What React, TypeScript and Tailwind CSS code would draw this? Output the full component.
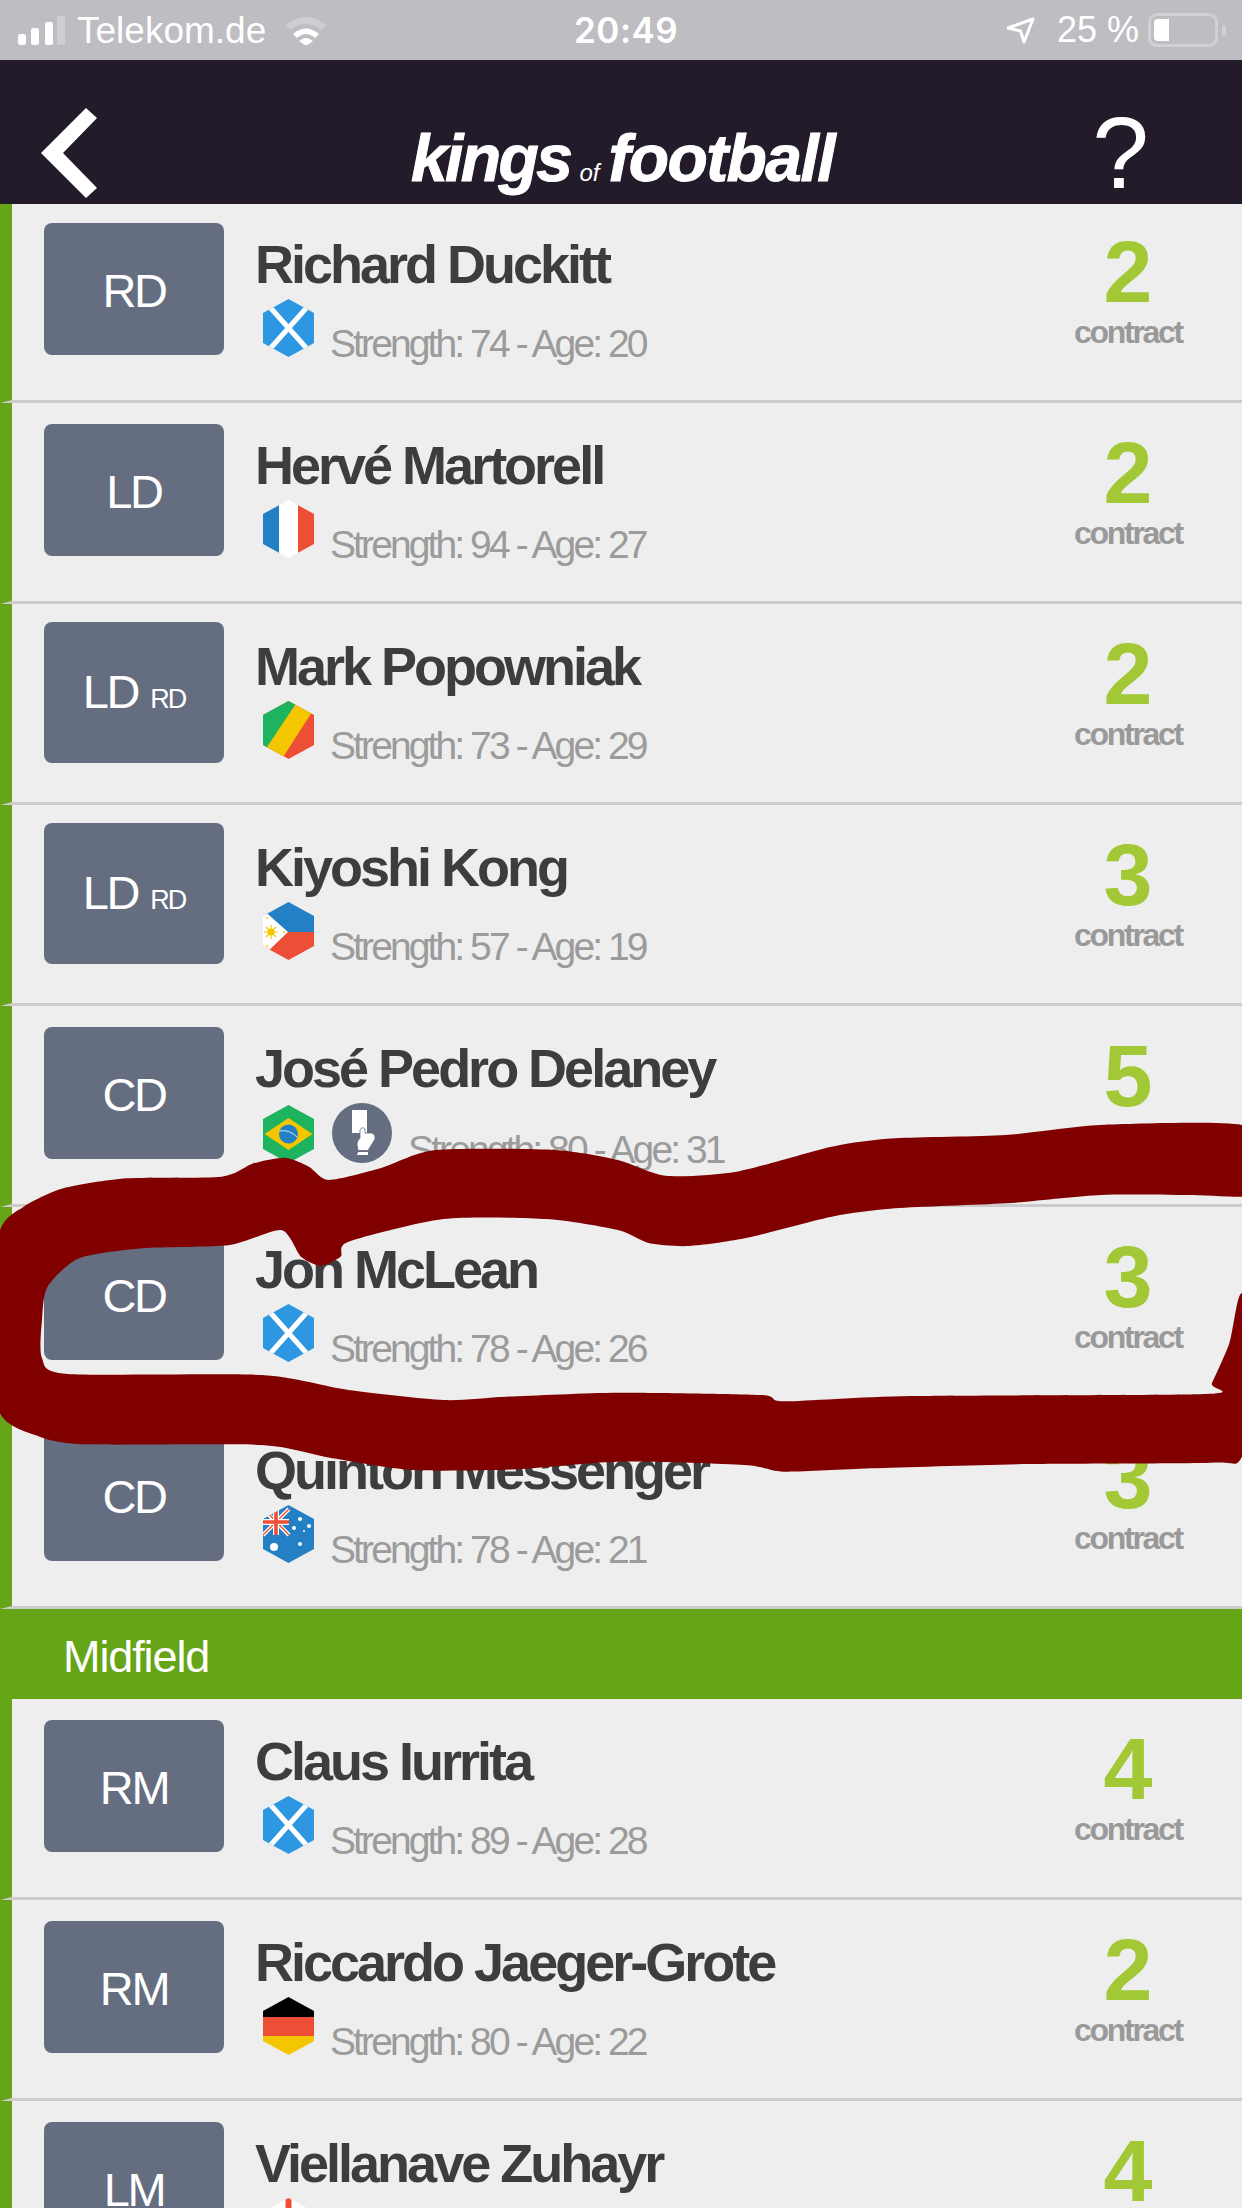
import { useId, type ReactNode } from "react";

const RED = "#ec4e36";
const BLUE = "#2480c4";
const GREEN = "#1db35f";
const YELLOW = "#f4c600";

function Hex({ children }: { children: ReactNode }) {
  const id = useId();
  return (
    <svg width="51" height="58" viewBox="0 0 51 58" className="shrink-0">
      <defs>
        <clipPath id={id}>
          <polygon points="25.5,0 51,14 51,44 25.5,58 0,44 0,14" />
        </clipPath>
      </defs>
      <g clipPath={`url(#${id})`}>{children}</g>
    </svg>
  );
}

const flags: Record<string, ReactNode> = {
  sco: (
    <>
      <rect width="51" height="58" fill="#2e97e2" />
      <path d="M5 6 L46 52 M46 6 L5 52" stroke="#fff" strokeWidth="5" />
    </>
  ),
  fra: (
    <>
      <rect width="16" height="58" fill={BLUE} />
      <rect x="16" width="19" height="58" fill="#fff" />
      <rect x="35" width="16" height="58" fill={RED} />
    </>
  ),
  cog: (
    <>
      <rect width="51" height="58" fill={RED} />
      <polygon points="34,1 49,11 19,58 -2,58 -2,50" fill={YELLOW} />
      <polygon points="34,1 30,-1 -2,-1 -2,52 4,46" fill={GREEN} />
    </>
  ),
  phi: (
    <>
      <rect width="51" height="30" fill={BLUE} />
      <rect y="30" width="51" height="28" fill={RED} />
      <polygon points="-2,6 25,30 -2,56" fill="#fff" />
      <circle cx="8" cy="30" r="3.6" fill={YELLOW} />
      <path d="M8 23 V37 M1 30 H15 M3 25 L13 35 M13 25 L3 35" stroke={YELLOW} strokeWidth="1.2" />
      <circle cx="4" cy="16" r="1" fill={YELLOW} />
      <circle cx="4" cy="44" r="1" fill={YELLOW} />
      <circle cx="21" cy="30" r="1" fill={YELLOW} />
    </>
  ),
  bra: (
    <>
      <rect width="51" height="58" fill={GREEN} />
      <polygon points="1.5,29 25.5,13 49.5,29 25.5,45" fill={YELLOW} />
      <circle cx="25.5" cy="29" r="9.5" fill={BLUE} />
      <path d="M16.5 26 Q26 24 34 32" stroke="#cfe8f2" strokeWidth="1" fill="none" />
    </>
  ),
  aus: (
    <>
      <rect width="51" height="58" fill={BLUE} />
      <path d="M0 30 L26 4 M0 4 L26 30" stroke="#fff" strokeWidth="4" />
      <path d="M0 30 L26 4 M1 4 L26 30" stroke={RED} strokeWidth="1.4" />
      <path d="M13 2 V30 M0 17 H26" stroke="#fff" strokeWidth="6" />
      <path d="M13 2 V30 M0 17 H26" stroke={RED} strokeWidth="3.6" />
      <circle cx="11" cy="42" r="4" fill="#fff" />
      <circle cx="37" cy="14" r="2" fill="#fff" />
      <circle cx="31" cy="23" r="2" fill="#fff" />
      <circle cx="46" cy="21" r="2" fill="#fff" />
      <circle cx="41" cy="26" r="1" fill="#fff" />
      <circle cx="37" cy="39" r="2" fill="#fff" />
    </>
  ),
  ger: (
    <>
      <rect width="51" height="20" fill="#000" />
      <rect y="20" width="51" height="19" fill={RED} />
      <rect y="39" width="51" height="19" fill={YELLOW} />
    </>
  ),
  eng: (
    <>
      <rect width="51" height="58" fill="#fff" />
      <rect x="22.5" width="6" height="58" fill={RED} />
      <rect y="26" width="51" height="6" fill={RED} />
    </>
  ),
};

function CardIcon() {
  return (
    <svg width="60" height="60" viewBox="0 0 60 60" className="ml-[18px] shrink-0">
      <circle cx="30" cy="30" r="30" fill="#656d80" />
      <rect x="20" y="7" width="15" height="23" fill="#fff" />
      <path
        d="M28 27 Q30 23 33 26 L33 30 L40 30 Q44 32 43 36 L36 47.5 L26 47.5 L25 41 Q25 38 28 35 Z"
        fill="#fff"
        stroke="#656d80"
        strokeWidth="0.8"
      />
      <path d="M26 49 H36 V52 H25 Z" fill="#fff" />
    </svg>
  );
}

type P = {
  pos: string;
  sub?: string;
  name: string;
  flag: string;
  s: number;
  a: number;
  c: number;
  card?: boolean;
};

function Row({ pos, sub, name, flag, s, a, c, card }: P) {
  return (
    <div className="flex h-[201px] shrink-0 border-l-[12px] border-b-[3px] border-l-[#65a517] border-b-[#cccccc] bg-[#eeeeee] pl-[32px] pr-[34px]">
      <div
        className={`flex w-[180px] shrink-0 items-center justify-center rounded-[8px] bg-[#656d80] text-white ${
          sub ? "mt-[18px] h-[141px] pb-[3px]" : "mt-[21px] h-[132px] pt-[3px]"
        }`}
      >
        <div className="flex items-baseline">
          <span className="text-[47px] leading-none tracking-[-2.4px]">{pos}</span>
          {sub && <span className="ml-[12px] text-[27px] leading-none tracking-[-2px]">{sub}</span>}
        </div>
      </div>
      <div className="ml-[31px] flex-1 pt-[35px]">
        <div className="whitespace-nowrap text-[54px] font-bold leading-[54px] tracking-[-3px] text-[#3c3d3f]">{name}</div>
        <div className="ml-[8px] mt-[8px] flex items-baseline">
          <Hex>{flags[flag]}</Hex>
          {card && <CardIcon />}
          <span className="ml-[16px] whitespace-nowrap text-[39px] leading-[39px] tracking-[-2.9px] text-[#9b9b9b]">
            Strength: {s} - Age: {a}
          </span>
        </div>
      </div>
      <div className="flex w-[160px] shrink-0 flex-col items-center pt-[26px]">
        <div className="text-[88px] font-bold leading-[88px] text-[#a2c935]">{c}</div>
        <div className="text-[32px] font-bold leading-[32px] tracking-[-2.3px] text-[#999999]">contract</div>
      </div>
    </div>
  );
}

const top: P[] = [
  { pos: "RD", name: "Richard Duckitt", flag: "sco", s: 74, a: 20, c: 2 },
  { pos: "LD", name: "Hervé Martorell", flag: "fra", s: 94, a: 27, c: 2 },
  { pos: "LD", sub: "RD", name: "Mark Popowniak", flag: "cog", s: 73, a: 29, c: 2 },
  { pos: "LD", sub: "RD", name: "Kiyoshi Kong", flag: "phi", s: 57, a: 19, c: 3 },
  { pos: "CD", name: "José Pedro Delaney", flag: "bra", s: 80, a: 31, c: 5, card: true },
  { pos: "CD", name: "Jon McLean", flag: "sco", s: 78, a: 26, c: 3 },
  { pos: "CD", name: "Quinton Messenger", flag: "aus", s: 78, a: 21, c: 3 },
];
const mid: P[] = [
  { pos: "RM", name: "Claus Iurrita", flag: "sco", s: 89, a: 28, c: 4 },
  { pos: "RM", name: "Riccardo Jaeger-Grote", flag: "ger", s: 80, a: 22, c: 2 },
  { pos: "LM", name: "Viellanave Zuhayr", flag: "eng", s: 70, a: 24, c: 4 },
];

const scribble: [number, number][] = [
  [1568, 375], [1390, 375], [1270, 405], [1130, 415], [1050, 440], [930, 515], [840, 527], [780, 480], [700, 450],
  [550, 450], [480, 505], [415, 540], [390, 500], [360, 473], [320, 490], [280, 530], [160, 535], [80, 565], [30, 620],
  [0, 690], [-20, 960], [0, 1240], [50, 1310], [110, 1333], [330, 1335], [420, 1375], [520, 1410], [650, 1408],
  [780, 1385], [940, 1395], [990, 1415], [1100, 1405], [1300, 1392], [1530, 1388], [1568, 1370], [1600, 1100],
  [1568, 880], [1552, 1030], [1530, 1150], [1522, 1182], [1150, 1188], [990, 1204], [960, 1185], [780, 1178], [640, 1190], [560, 1200],
  [440, 1170], [330, 1125], [85, 1122], [53, 1075], [53, 960], [60, 860], [100, 775], [180, 745], [290, 735], [355, 690],
  [380, 770], [405, 797], [430, 770], [440, 725], [560, 657], [690, 657], [780, 690], [820, 730], [870, 738], [940, 715],
  [1050, 650], [1130, 625], [1270, 610], [1390, 585], [1500, 585], [1600, 585], [1620, 480],
];

function smooth(pts: [number, number][]) {
  const n = pts.length;
  let d = `M${pts[0][0]} ${pts[0][1]}`;
  for (let i = 0; i < n; i++) {
    const p0 = pts[(i - 1 + n) % n];
    const p1 = pts[i];
    const p2 = pts[(i + 1) % n];
    const p3 = pts[(i + 2) % n];
    const k = 0.12;
    d += ` C${p1[0] + (p2[0] - p0[0]) * k} ${p1[1] + (p2[1] - p0[1]) * k} ${p2[0] - (p3[0] - p1[0]) * k} ${p2[1] - (p3[1] - p1[1]) * k} ${p2[0]} ${p2[1]}`;
  }
  return d + "Z";
}

export default function App() {
  return (
    <div
      className="relative h-[2208px] w-[1242px] overflow-hidden bg-[#eeeeee]"
      style={{ fontFamily: '"Liberation Sans", Arial, sans-serif' }}
    >
      {/* status bar */}
      <div className="relative z-10 flex h-[60px] items-center bg-[#bebdc2] text-[36px] leading-none text-white">
        <svg width="48" height="30" viewBox="0 0 48 30" className="ml-[18px] mt-[1px] shrink-0">
          <rect x="0" y="18" width="8" height="11" rx="2.5" fill="#fff" />
          <rect x="13" y="12" width="8" height="17" rx="2.5" fill="#fff" />
          <rect x="27" y="6" width="8" height="23" rx="2.5" fill="#fff" />
          <rect x="39" y="0" width="8" height="29" rx="2.5" fill="#fff" fillOpacity="0.25" />
        </svg>
        <span className="ml-[11px] w-[208px] shrink-0 whitespace-nowrap text-[37px]">Telekom.de</span>
        <svg width="42" height="30" viewBox="0 0 42 30" className="shrink-0">
          <path d="M1 10 Q21 -6 41 10 L37 15 Q21 3 5 15 Z" fill="#fff" fillOpacity="0.25" />
          <path d="M8 19 Q21 8 34 19 L30 23 Q21 15 12 23 Z" fill="#fff" />
          <path d="M14 26 Q21 20 28 26 L21 31 Z" fill="#fff" />
        </svg>
        <span
          className="ml-[247px] w-[104px] shrink-0 text-center text-[35px] font-semibold tracking-[0.5px]"
          style={{ fontFamily: "Inter, sans-serif" }}
        >
          20:49
        </span>
        <svg width="28" height="27" viewBox="0 0 28 27" className="ml-[329px] shrink-0">
          <path d="M1 11 L26 2 L17 25 L13.5 14 Z" fill="none" stroke="#fff" strokeWidth="3" strokeLinejoin="round" />
        </svg>
        <span className="ml-[22px] w-[91px] shrink-0 whitespace-nowrap">25 %</span>
        <div className="flex h-[34px] w-[70px] shrink-0 items-center rounded-[9px] border-[3px] border-white/30 pl-[3px]">
          <div className="h-[22px] w-[15px] rounded-l-[4px] bg-white" />
        </div>
        <div className="ml-[4px] h-[11px] w-[4px] rounded-r-[3px] bg-white/30" />
      </div>

      {/* nav */}
      <div className="relative z-10 flex h-[144px] items-start bg-[#231b2a] text-white">
        <svg width="56" height="90" viewBox="0 0 56 90" className="ml-[41px] mt-[48px] shrink-0">
          <polygon points="45,0 56,10 22,45 56,80 45,90 0,45" fill="#fff" />
        </svg>
        <div className="ml-[314px] mt-[60px] flex shrink-0 items-baseline font-bold italic leading-[76px] text-white [-webkit-text-stroke:1px_white]">
          <span className="text-[66px] tracking-[-2.6px]">kings</span>
          <span className="ml-[9px] mr-[9px] text-[24px] font-normal [-webkit-text-stroke:0px_white]">of</span>
          <span className="text-[66px] tracking-[-1.6px]">football</span>
        </div>
        <span className="ml-auto mr-[93px] mt-[36px] text-[102px] leading-[114px]">?</span>
      </div>

      {/* list */}
      <div className="-mt-[2px] flex flex-col">
        {top.map((p) => (
          <Row key={p.name} {...p} />
        ))}
        <div className="flex h-[90px] shrink-0 items-start bg-[#65a517] pl-[63px] pt-[23px] text-[45px] leading-[50px] tracking-[-1.1px] text-white">
          Midfield
        </div>
        {mid.map((p) => (
          <Row key={p.name} {...p} />
        ))}
      </div>

      {/* hand drawn marker annotation */}
      <svg
        className="absolute left-0 top-[1000px] z-20 h-[500px] w-[1242px]"
        viewBox="0 0 1568 1500"
        preserveAspectRatio="none"
      >
        <path d={smooth(scribble)} fill="#800000" />
      </svg>
    </div>
  );
}
